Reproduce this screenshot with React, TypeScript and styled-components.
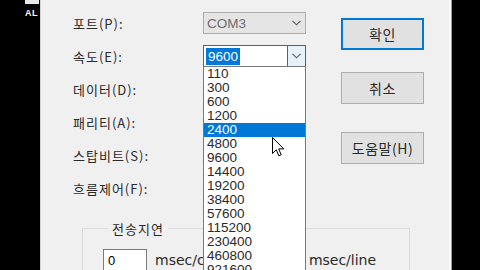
import { Fragment } from 'react'
import styled, { createGlobalStyle } from 'styled-components'

const GlobalStyle = createGlobalStyle`
  html, body {
    margin: 0;
    padding: 0;
    background: #000000;
  }
  #root {
    width: 480px;
    height: 270px;
    overflow: hidden;
  }
`

const KR = `"Noto Sans CJK KR", "Noto Sans", sans-serif`
const LATIN = `"Liberation Sans", Arial, sans-serif`

// -- Moldura --
const Page = styled.div`
  display: flex;
  width: 480px;
  height: 270px;
  background: #000000;
`

const LeftStrip = styled.div`
  width: 40px;
  flex-shrink: 0;
  display: flex;
  flex-direction: column;
  padding-left: 25px;
  box-sizing: border-box;
`

const StripBar = styled.div`
  width: 14px;
  height: 4px;
  background: #e8e8e8;
`

const StripLabel = styled.span`
  margin-top: 5px;
  font-family: ${LATIN};
  font-size: 9px;
  font-weight: 700;
  line-height: 9px;
  color: #ffffff;
  letter-spacing: 0.5px;
`

const Dialog = styled.div`
  position: relative;
  width: 412px;
  flex-shrink: 0;
  box-sizing: border-box;
  background: #f0f0f0;
  border-left: 1px solid #d4d4d4;
  border-right: 1px solid #9a9a9a;
  box-shadow: inset -2px 0 0 #fafafa;
  overflow: hidden;
`

const TopArea = styled.div`
  display: flex;
  padding: 12px 0 0 32px;
`

const FieldGrid = styled.div`
  display: grid;
  grid-template-columns: 130px 103px;
  grid-auto-rows: 22px;
  row-gap: 11px;
`

const Label = styled.div`
  display: flex;
  align-items: center;
  font-family: ${KR};
  font-size: 13px;
  letter-spacing: 1px;
  color: #2a2a2a;
`

// -- Combo --
const Combo = styled.div<{ $state: 'disabled' | 'focused' | 'normal' }>`
  display: flex;
  box-sizing: border-box;
  height: 22px;
  border: 1px solid ${(p) => (p.$state === 'focused' ? '#0078d7' : '#adadad')};
  background: ${(p) => (p.$state === 'disabled' ? '#e5e5e5' : '#ffffff')};
  font-family: ${LATIN};
  font-size: 13.5px;
  color: ${(p) => (p.$state === 'disabled' ? '#6d6d6d' : '#000000')};
`

const ComboValue = styled.div`
  flex: 1;
  display: flex;
  align-items: center;
  padding-left: 3px;
`

const Selected = styled.span`
  background: #0078d7;
  color: #ffffff;
  line-height: 17px;
  padding: 0 2px;
  margin-left: -1px;
`

const DropButton = styled.div<{ $focused?: boolean }>`
  width: 17px;
  display: flex;
  align-items: center;
  justify-content: center;
  background: ${(p) => (p.$focused ? '#e5f1fb' : 'transparent')};
  border-left: 1px solid ${(p) => (p.$focused ? '#0078d7' : 'transparent')};
`

const Chevron = () => (
  <svg width="9" height="6" viewBox="0 0 9 6">
    <polyline points="0.5,0.8 4.5,4.8 8.5,0.8" fill="none" stroke="#5a5a5a" strokeWidth="1.1" />
  </svg>
)

// -- Botões --
const ButtonCol = styled.div`
  display: flex;
  flex-direction: column;
  margin-left: 35px;
  padding-top: 6px;
`

const DlgButton = styled.div<{ $primary?: boolean; $mt?: number }>`
  width: 83px;
  height: 32px;
  box-sizing: border-box;
  margin-top: ${(p) => p.$mt ?? 0}px;
  display: flex;
  align-items: center;
  justify-content: center;
  background: #e1e1e1;
  border: ${(p) => (p.$primary ? '2px solid #0078d7' : '1px solid #adadad')};
  font-family: ${KR};
  font-size: 14px;
  letter-spacing: 0.5px;
  color: #2a2a2a;
`

// -- Grupo --
const GroupBox = styled.fieldset`
  width: 328px;
  box-sizing: border-box;
  margin: 22px 0 0 41px;
  padding: 13px 0 0 20px;
  border: 1px solid #dcdcdc;
  border-bottom: none;
  min-height: 60px;
`

const GroupLegend = styled.legend`
  margin-left: 5px;
  padding: 0 4px;
  font-family: ${KR};
  font-size: 13px;
  line-height: 15px;
  letter-spacing: 1px;
  color: #2a2a2a;
`

const DelayRow = styled.div`
  display: flex;
  align-items: center;
`

const TextBox = styled.div<{ $ml?: number }>`
  width: 44px;
  height: 22px;
  box-sizing: border-box;
  margin-left: ${(p) => p.$ml ?? 0}px;
  border: 1px solid #7a7a7a;
  background: #ffffff;
  padding-left: 4px;
  display: flex;
  align-items: center;
  font-family: ${LATIN};
  font-size: 13px;
  color: #000000;
`

const Unit = styled.span`
  margin-left: 8px;
  font-family: "DejaVu Sans", sans-serif;
  font-size: 14px;
  color: #2a2a2a;
`

// -- Lista suspensa --
const DropList = styled.ul`
  position: absolute;
  left: 162px;
  top: 66px;
  width: 103px;
  height: 230px;
  box-sizing: border-box;
  margin: 0;
  padding: 0;
  list-style: none;
  background: #ffffff;
  border: 1px solid #7a7a7a;
`

const DropItem = styled.li<{ $active?: boolean }>`
  height: 14px;
  line-height: 14px;
  padding-left: 3px;
  font-family: ${LATIN};
  font-size: 13.5px;
  color: ${(p) => (p.$active ? '#ffffff' : '#2a2a2a')};
  background: ${(p) => (p.$active ? '#0078d7' : 'transparent')};
`

const Cursor = styled.svg`
  position: absolute;
  left: 231px;
  top: 137px;
`

// linhas 3..6 ficam tapadas pela lista aberta
const fields = [
  { label: '포트(P):', value: 'COM3', state: 'disabled' as const },
  { label: '속도(E):', value: '9600', state: 'focused' as const },
  { label: '데이터(D):', value: '', state: 'normal' as const },
  { label: '패리티(A):', value: '', state: 'normal' as const },
  { label: '스탑비트(S):', value: '', state: 'normal' as const },
  { label: '흐름제어(F):', value: '', state: 'normal' as const },
]

const speeds = [
  '110', '300', '600', '1200', '2400', '4800', '9600', '14400', '19200',
  '38400', '57600', '115200', '230400', '460800', '921600', '',
]

const App = () => {
  return (
    <>
      <GlobalStyle />
      <Page>
        <LeftStrip>
          <StripBar />
          <StripLabel>AL</StripLabel>
        </LeftStrip>
        <Dialog>
          <TopArea>
            <FieldGrid>
              {fields.map((f) => (
                <Fragment key={f.label}>
                  <Label>{f.label}</Label>
                  <Combo $state={f.state}>
                    <ComboValue>
                      {f.state === 'focused' ? <Selected>{f.value}</Selected> : f.value}
                    </ComboValue>
                    <DropButton $focused={f.state === 'focused'}>
                      <Chevron />
                    </DropButton>
                  </Combo>
                </Fragment>
              ))}
            </FieldGrid>
            <ButtonCol>
              <DlgButton $primary>확인</DlgButton>
              <DlgButton $mt={22}>취소</DlgButton>
              <DlgButton $mt={28}>도움말(H)</DlgButton>
            </ButtonCol>
          </TopArea>

          <GroupBox>
            <GroupLegend>전송지연</GroupLegend>
            <DelayRow>
              <TextBox>0</TextBox>
              <Unit>msec/char</Unit>
              <TextBox $ml={29} />
              <Unit>msec/line</Unit>
            </DelayRow>
          </GroupBox>

          <DropList>
            {speeds.map((s, i) => (
              <DropItem key={i} $active={s === '2400'}>
                {s}
              </DropItem>
            ))}
          </DropList>

          <Cursor width="13" height="21" viewBox="0 0 13 21">
            <path
              d="M0.5 0.5 L0.5 16.5 L4.3 12.8 L6.8 18.8 L9.2 17.8 L6.7 11.9 L11.8 11.9 Z"
              fill="#ffffff"
              stroke="#000000"
              strokeWidth="1"
              strokeLinejoin="miter"
            />
          </Cursor>
        </Dialog>
      </Page>
    </>
  )
}

export default App
